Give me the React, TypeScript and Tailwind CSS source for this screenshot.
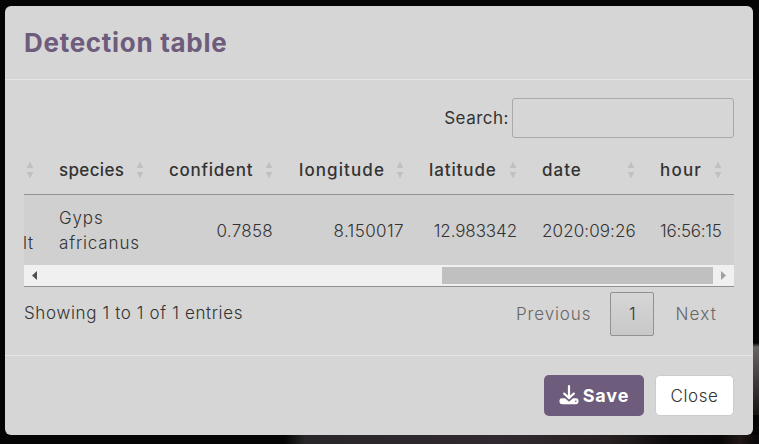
function Fit({ children, className = "" }: { children: string; className?: string }) {
  return <span className={"whitespace-nowrap " + className}>{children}</span>;
}

function SortArrows({ className = "" }: { className?: string }) {
  return (
    <svg className={"h-[18px] w-2 shrink-0 " + className} viewBox="0 0 8 18" fill="#c0c0c0">
      <path d="M4 0.5 7.3 7H0.7zM4 17.5 7.3 11H0.7z" />
    </svg>
  );
}

function DownloadIcon() {
  return (
    <svg className="h-5 w-5 shrink-0" viewBox="0 0 20 20" fill="none">
      <rect x="0.5" y="13.2" width="19" height="6" rx="2.4" fill="#fff" />
      <path d="M6.6 12.6 10 15.6l3.4-3" stroke="#6e5c7c" strokeWidth="1.6" />
      <path d="M10 1.2v11.3M5.2 8.6l4.8 4.4 4.8-4.4" stroke="#fff" strokeWidth="2.2" strokeLinecap="round" strokeLinejoin="round" />
      <circle cx="16.8" cy="16.3" r="0.8" fill="#6e5c7c" />
    </svg>
  );
}

const columns = [
  { label: "species", value: "Gyps africanus", head: "tracking-[0.35px]", cell: "tracking-[0.85px] justify-start pr-[13px]" },
  { label: "confident", value: "0.7858", head: "tracking-[0.75px]", cell: "justify-end tracking-[0.3px] pr-[13px]" },
  { label: "longitude", value: "8.150017", head: "tracking-[1.1px] pl-px", cell: "justify-end tracking-[0.4px] pr-[13px]" },
  { label: "latitude", value: "12.983342", head: "tracking-[0.9px]", cell: "justify-end tracking-[-0.1px] pr-[13px]" },
  { label: "date", value: "2020:09:26", head: "tracking-[1px]", cell: "justify-start tracking-[0.1px] pr-[13px]" },
  { label: "hour", value: "16:56:15", head: "tracking-[1.2px]", cell: "justify-start tracking-[-0.25px]" },
];

const tracks = "grid grid-cols-[23px_110px_129px_131px_113px_118px_86px]";

export default function App() {
  return (
    <div className="h-[444px] w-[759px] overflow-hidden [background:linear-gradient(transparent,#686464_4px,#393435_60%,#171414)_100%_343px/6px_72px_no-repeat,linear-gradient(90deg,transparent_285px,#292629_305px,#30292f_500px,#272021_610px,#0d0b0c_670px,#090707_720px,#201817_740px,#0b0909_755px)_0_100%/100%_9px_no-repeat,#050505] pt-[6px] pl-[5px] font-['Inter','Liberation_Sans',sans-serif] text-[17px] font-light text-[#333]">
      <div className="flex h-[429px] w-[748px] flex-col rounded-[6px] bg-[#d6d6d6]">
        <header className="flex h-[74px] items-center border-b border-[#e5e5e5] px-[19px]">
          <h2 className="text-[26px] font-bold tracking-[0.7px] text-[#6e5c7c]"><Fit>Detection table</Fit></h2>
        </header>
        <main className="h-[276px] border-b border-[#e5e5e5] px-[19px] pt-[18px]">
          <label className="flex h-10 items-center justify-end gap-[3px] font-normal">
            <Fit className="pt-[2px] tracking-[0.5px]">Search:</Fit>
            <input className="h-10 w-[222px] rounded-[3px] border border-[#aaa] bg-transparent" />
          </label>
          <div className={tracks + " h-[57px] items-center border-b border-[#919191] pt-[8px] font-medium"}>
            <SortArrows className="ml-[2px]" />
            {columns.map((c) => (
              <div key={c.label} className="flex items-center justify-between pr-[13px] pl-3 last:pr-3">
                <Fit className={"pt-[2px] " + c.head}>{c.label}</Fit>
                <SortArrows />
              </div>
            ))}
          </div>
          <div className={tracks + " h-[70px] items-center bg-[#d0d0d0] pt-[2px] leading-[25px]"}>
            <div className="flex h-[50px] items-end overflow-hidden"><Fit className="-ml-px tracking-[0.7px]">lt</Fit></div>
            {columns.map((c) => (
              <div key={c.label} className={"flex pl-3 " + c.cell}>{c.value}</div>
            ))}
          </div>
          <div className="flex h-[22px] items-center border-b border-[#919191] bg-[#f0f0f0]">
            <svg className="ml-2 h-[9px] w-[5px]" viewBox="0 0 5 9" fill="#505050"><path d="M5 0v9L0 4.5z" /></svg>
            <div className="ml-[405px] h-[17px] w-[271px] bg-[#c0c0c0]" />
            <svg className="ml-2 h-[9px] w-[5px]" viewBox="0 0 5 9" fill="#a0a0a0"><path d="M0 0v9l5-4.5z" /></svg>
          </div>
          <div className="flex h-[54px] items-center justify-between">
            <Fit className="tracking-[0.63px]">Showing 1 to 1 of 1 entries</Fit>
            <div className="flex items-center pr-[17px] text-[#666]">
              <Fit className="pt-[2px] tracking-[0.9px]">Previous</Fit>
              <div className="mr-[21px] ml-[19px] flex size-11 items-center justify-center rounded-[2px] border border-[#919191] bg-linear-to-b from-[#d6d6d6] to-[#c8c8c8] pt-[2px] text-[#333]">1</div>
              <Fit className="pt-[2px] tracking-[1.2px]">Next</Fit>
            </div>
          </div>
        </main>
        <footer className="flex flex-1 items-start justify-end gap-[11px] px-[19px] pt-[19px]">
          <button className="flex h-[41px] w-[100px] items-center justify-center gap-1 rounded-[5px] bg-[#6e5c7c] pb-px text-[18px] font-bold text-white"><DownloadIcon /><Fit className="tracking-[0.9px]">Save</Fit></button>
          <button className="flex h-[41px] w-[79px] items-center justify-center rounded-[5px] border border-[#ccc] bg-white"><Fit className="pt-[2px] tracking-[0.6px]">Close</Fit></button>
        </footer>
      </div>
    </div>
  );
}
